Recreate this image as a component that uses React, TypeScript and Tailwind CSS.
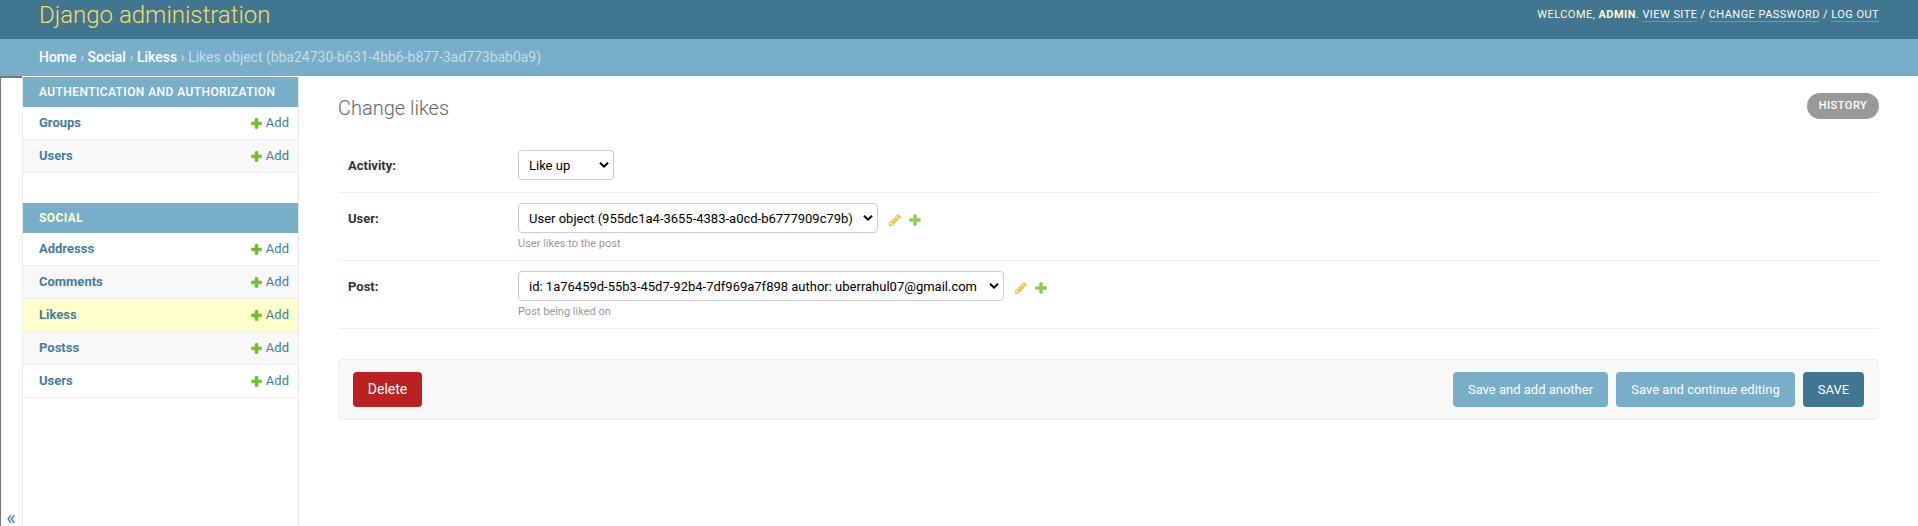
import React from 'react';

function PlusIcon({ className }: { className: string }) {
  return (
    <svg viewBox="0 0 1792 1792" className={className} aria-hidden="true">
      <path d="M1600 796v192q0 40-28 68t-68 28h-416v416q0 40-28 68t-68 28h-192q-40 0-68-28t-28-68v-416h-416q-40 0-68-28t-28-68v-192q0-40 28-68t68-28h416v-416q0-40 28-68t68-28h192q40 0 68 28t28 68v416h416q40 0 68 28t28 68z" />
    </svg>
  );
}

function PencilIcon() {
  return (
    <svg viewBox="0 0 1792 1792" className="size-[14px] fill-[#efb80b] opacity-80" aria-hidden="true">
      <path d="M491 1536l91-91-235-235-91 91v107h128v128h107zm523-928q0-22-22-22-10 0-17 7l-542 542q-7 7-7 17 0 22 22 22 10 0 17-7l542-542q7-7 7-17zm-54-192l416 416-832 832h-416v-416zm683 96q0 53-37 90l-166 166-416-416 166-165q36-38 90-38 53 0 91 38l235 234q37 39 37 91z" />
    </svg>
  );
}

type Item = { name: string; current?: boolean };

function AppModule({ title, items, active }: { title: string; items: Item[]; active?: boolean }) {
  return (
    <section className="mb-[30px]">
      <h2
        className={`flex h-[30px] items-center bg-[#79aec8] pl-4 text-[12px] uppercase ${
          active ? 'font-bold tracking-[0.4px] text-[#ffffcc]' : 'font-medium tracking-[0.42px] text-white'
        }`}
      >
        {title}
      </h2>
      {items.map((item, i) => (
        <div
          key={item.name}
          className={`flex h-[33px] items-center justify-between border-b border-[#eee] pr-[9px] pl-4 text-[13px] text-[#447e9b] ${
            item.current ? 'bg-[#ffffcc]' : i % 2 ? 'bg-[#f8f8f8]' : 'bg-white'
          }`}
        >
          <a className="font-bold">{item.name}</a>
          <a className="flex items-center gap-[3px]">
            <PlusIcon className="size-[13px] fill-[#70bf2b] stroke-[#70bf2b] stroke-[100]" />
            Add
          </a>
        </div>
      ))}
    </section>
  );
}

function SelectBox({ value, className }: { value: string; className: string }) {
  return (
    <div className={`flex h-[30px] items-center justify-between rounded-[4px] border border-[#ccc] pr-[4px] pl-[10px] text-[13px] text-black ${className}`}>
      <span className="pt-[2px] whitespace-nowrap">{value}</span>
      <svg viewBox="0 0 10 8" className="h-[8px] w-[10px] fill-none stroke-black stroke-2" aria-hidden="true">
        <path d="M1 1.7 5 5.7 9 1.7" />
      </svg>
    </div>
  );
}

type FieldProps = { label: string; value: string; width: string; help?: string; className: string };

function Field({ label, value, width, help, className }: FieldProps) {
  return (
    <div className={`flex border-b border-[#eee] pt-[10px] ${className}`}>
      <label className="w-[180px] shrink-0 pt-px pl-[10px] text-[13px] leading-[30px] font-bold text-[#333]">{label}</label>
      <div>
        <div className="flex items-center">
          <SelectBox value={value} className={width} />
          {help && (
            <div className="mt-[3px] ml-[9.5px] flex items-center gap-[6px]">
              <PencilIcon />
              <PlusIcon className="size-[14px] fill-[#70bf2b] stroke-[#70bf2b] stroke-[60] opacity-80" />
            </div>
          )}
        </div>
        {help && <p className="mt-[4px] text-[11px] leading-[14px] text-[#999]">{help}</p>}
      </div>
    </div>
  );
}

function TopLink({ children }: { children: React.ReactNode }) {
  return <a className="border-b border-white/25">{children}</a>;
}

export default function App() {
  return (
    <div className="flex h-[526px] w-full flex-col overflow-hidden bg-white font-['Roboto',sans-serif] text-[13px] text-[#333]">
      <header className="flex h-[39px] shrink-0 items-start justify-between bg-[#417690] pr-[39px] pl-[39px]">
        <h1 className="text-[24px] leading-[30px] font-light text-[#f5dd5d]">Django administration</h1>
        <div className="pt-[8px] text-[11px] leading-[14px] tracking-[0.45px] text-white uppercase">
          <span className="text-[#ffc]">
            Welcome, <strong className="font-bold">admin</strong>.{' '}
          </span>
          <TopLink>View site</TopLink> / <TopLink>Change password</TopLink> / <TopLink>Log out</TopLink>
        </div>
      </header>
      <nav className="h-[37px] shrink-0 bg-[#79aec8] pl-[39px] text-[14px] leading-[37px] tracking-[-0.02px] text-[#c4dce8]">
        <a className="font-medium text-white">Home</a> › <a className="font-medium text-white">Social</a> ›{' '}
        <a className="font-medium text-white">Likess</a> › Likes object (bba24730-b631-4bb6-b877-3ad773bab0a9)
      </nav>
      <div className="flex min-h-0 flex-1">
        <button className="flex w-[22px] shrink-0 items-end justify-center border-t-2 border-l border-[#767676] pr-px text-[20px] leading-[16px] text-[#447e9b]">
          «
        </button>
        <aside className="w-[277px] shrink-0 border-x border-[#eaeaea] pt-px">
          <AppModule title="Authentication and Authorization" items={[{ name: 'Groups' }, { name: 'Users' }]} />
          <AppModule
            title="Social"
            active
            items={[{ name: 'Addresss' }, { name: 'Comments' }, { name: 'Likess', current: true }, { name: 'Postss' }, { name: 'Users' }]}
          />
        </aside>
        <main className="flex-1 pr-[39px] pl-[39px]">
          <div className="flex h-[64px] items-start justify-between">
            <h1 className="pt-[20px] text-[20px] leading-[24px] font-light text-[#666]">Change likes</h1>
            <a className="mt-[17px] flex h-[26px] w-[72px] items-center justify-center rounded-full bg-[#999] pt-px text-[11px] font-medium tracking-[0.5px] text-white uppercase">
              History
            </a>
          </div>
          <Field label="Activity:" value="Like up" width="w-[96px]" className="h-[53px]" />
          <Field
            label="User:"
            value="User object (955dc1a4-3655-4383-a0cd-b6777909c79b)"
            width="w-[360px]"
            help="User likes to the post"
            className="h-[68px]"
          />
          <Field
            label="Post:"
            value="id: 1a76459d-55b3-45d7-92b4-7df969a7f898 author: uberrahul07@gmail.com"
            width="w-[486px]"
            help="Post being liked on"
            className="h-[68px]"
          />
          <div className="mt-[30px] flex h-[61px] items-center rounded-[4px] border border-[#eee] bg-[#f8f8f8] px-[14px] text-white">
            <a className="mr-auto flex h-[35px] w-[69px] items-center justify-center rounded-[4px] bg-[#ba2121] text-[14px]">
              Delete
            </a>
            <div className="flex gap-2">
              <button className="h-[35px] w-[155px] rounded-[4px] bg-[#79aec8]">Save and add another</button>
              <button className="h-[35px] w-[179px] rounded-[4px] bg-[#79aec8]">Save and continue editing</button>
              <button className="h-[35px] w-[61px] rounded-[4px] bg-[#417690]">SAVE</button>
            </div>
          </div>
        </main>
      </div>
    </div>
  );
}
